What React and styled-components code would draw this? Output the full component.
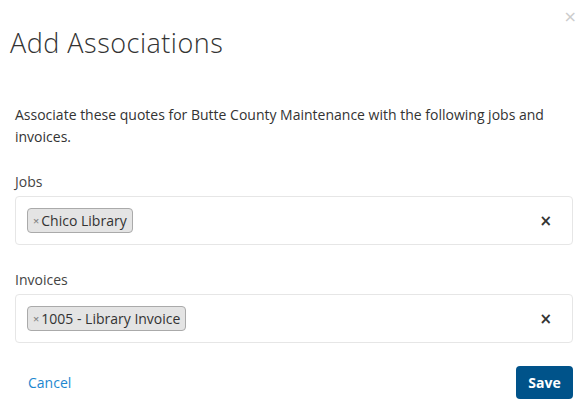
import React from "react";
import styled, { createGlobalStyle } from "styled-components";

const Global = createGlobalStyle`
  html, body { margin: 0; padding: 0; background: #fff; }
  body { font-family: "Open Sans", "Liberation Sans", sans-serif; color: #333; }
  * { box-sizing: border-box; }
`;

const Modal = styled.div`
  position: relative;
  width: 587px;
  height: 415px;
  background: #fff;
  display: flex;
  flex-direction: column;
`;

const Close = styled.button`
  position: absolute;
  top: 9px;
  right: 10px;
  border: none;
  background: none;
  padding: 0;
  color: #ccc;
  font-size: 16px;
  line-height: 16px;
  font-family: "DejaVu Sans", sans-serif;
  cursor: pointer;
`;

const Header = styled.div`
  padding: 26px 14px 0 10px;
`;

const Title = styled.h2`
  margin: 0;
  font-family: "Open Sans", sans-serif;
  font-weight: 300;
  font-size: 27px;
  line-height: 34px;
  color: #333;
  letter-spacing: 0.5px;
`;

const Body = styled.div`
  padding: 44px 14px 0 15px;
  display: flex;
  flex-direction: column;
`;

const Description = styled.p`
  margin: 0 0 23px;
  font-size: 14px;
  line-height: 22px;
  color: #333;
`;

const Field = styled.div`
  display: flex;
  flex-direction: column;
  margin-bottom: ${(p) => (p.$last ? "23px" : "24px")};
`;

const Label = styled.label`
  font-size: 14px;
  line-height: 22px;
  color: #444;
  margin-bottom: 3px;
`;

const SelectBox = styled.div`
  height: 49px;
  border: 1px solid #e6e6e6;
  border-radius: 4px;
  display: flex;
  align-items: center;
  padding: 0 20px 0 11px;
`;

const Tags = styled.div`
  flex: 1;
  display: flex;
  gap: 5px;
`;

const Tag = styled.span`
  display: inline-flex;
  align-items: center;
  height: 25px;
  padding: 0 5px 0 5px;
  background: #e4e4e4;
  border: 1px solid #aaa;
  border-radius: 4px;
  font-size: 14px;
  color: #333;
`;

const TagRemove = styled.span`
  font-size: 11px;
  color: #888;
  margin-right: 2px;
  font-weight: 600;
`;

const Clear = styled.span`
  font-size: 15px;
  font-weight: 700;
  color: #333;
  font-family: "DejaVu Sans", sans-serif;
`;

const Footer = styled.div`
  display: flex;
  justify-content: space-between;
  align-items: center;
  padding: 0 14px 0 15px;
`;

const LinkButton = styled.button`
  border: none;
  background: none;
  padding: 0 13px;
  height: 33px;
  font-family: "Open Sans", sans-serif;
  font-size: 14px;
  color: #1c87cf;
  cursor: pointer;
`;

const PrimaryButton = styled.button`
  border: none;
  background: #00538a;
  color: #fff;
  height: 33px;
  width: 57px;
  border-radius: 4px;
  font-family: "Open Sans", sans-serif;
  font-weight: 700;
  font-size: 14px;
  cursor: pointer;
`;

const fields = [
  { label: "Jobs", tags: ["Chico Library"] },
  { label: "Invoices", tags: ["1005 - Library Invoice"] },
];

export default function App() {
  return (
    <>
      <Global />
      <Modal>
        <Close>×</Close>
        <Header>
          <Title>Add Associations</Title>
        </Header>
        <Body>
          <Description>
            Associate these quotes for Butte County Maintenance with the following jobs and invoices.
          </Description>
          {fields.map((f, i) => (
            <Field key={f.label} $last={i === fields.length - 1}>
              <Label>{f.label}</Label>
              <SelectBox>
                <Tags>
                  {f.tags.map((t) => (
                    <Tag key={t}>
                      <TagRemove>×</TagRemove>
                      {t}
                    </Tag>
                  ))}
                </Tags>
                <Clear>×</Clear>
              </SelectBox>
            </Field>
          ))}
        </Body>
        <Footer>
          <LinkButton>Cancel</LinkButton>
          <PrimaryButton>Save</PrimaryButton>
        </Footer>
      </Modal>
    </>
  );
}
